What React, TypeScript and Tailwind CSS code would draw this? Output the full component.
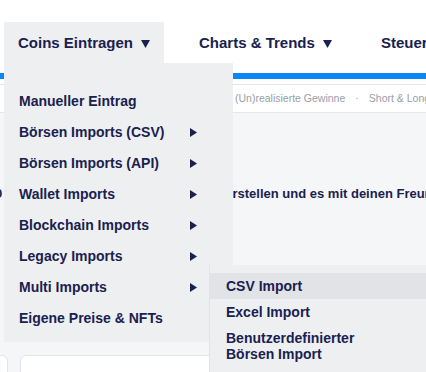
import { ReactNode } from "react"

const NAVY = "text-[#19214f]"

const menuItems: { label: string; sub?: boolean }[] = [
  { label: "Manueller Eintrag" },
  { label: "Börsen Imports (CSV)", sub: true },
  { label: "Börsen Imports (API)", sub: true },
  { label: "Wallet Imports", sub: true },
  { label: "Blockchain Imports", sub: true },
  { label: "Legacy Imports", sub: true },
  { label: "Multi Imports", sub: true },
  { label: "Eigene Preise & NFTs" },
]

const subItems = ["CSV Import", "Excel Import", "Benutzerdefinierter Börsen Import"]

const Caret = () => (
  <svg width="9" height="8" viewBox="0 0 9 8" className="ml-[8px]">
    <path d="M0 0h9L4.5 8z" fill="currentColor" />
  </svg>
)

const RightArrow = () => (
  <svg width="7" height="9" viewBox="0 0 7 9">
    <path d="M0 0l7 4.5L0 9z" fill="currentColor" />
  </svg>
)

const SubMenu = () => (
  <div className="absolute left-[206px] top-[-7px] w-[230px] bg-[#eeeff1] pt-[8px] pb-[8px] z-20 shadow-[-1px_0_0_#e2e3e7]">
    {subItems.map((s, i) => (
      <div
        key={s}
        className={`pl-[16px] py-[5px] leading-[16px] text-[14px] font-bold ${NAVY} ${i === 0 ? "bg-[#e2e3e7]" : ""}`}
      >
        <span className="block max-w-[150px]">{s}</span>
      </div>
    ))}
  </div>
)

const NavTab = ({ label, active, children }: { label: string; active?: boolean; children?: ReactNode }) => (
  <div className={`relative h-[41px] px-[14px] pt-[2px] flex items-center ${active ? "bg-[#eeeff1]" : ""}`}>
    <span className={`text-[15px] font-bold ${NAVY} flex items-center whitespace-nowrap`}>
      {label}
      <Caret />
    </span>
    {children}
  </div>
)

export default function App() {
  return (
    <div className="w-[426px] h-[372px] overflow-hidden relative bg-[#f5f6f8] font-['Liberation_Sans',Arial,sans-serif]">
      <header className="bg-white pt-[22px] pb-[10px] pl-[4px]">
        <div className="flex gap-[21px]">
          <NavTab label="Coins Eintragen" active>
            <div className="absolute left-0 top-full w-[229px] bg-[#eeeff1] pt-[23px] pb-[8px] z-10">
              {menuItems.map((m) => (
                <div key={m.label} className="relative h-[31px] pl-[15px] pr-[36px] flex items-center justify-between">
                  <span className={`text-[14px] font-bold ${NAVY} whitespace-nowrap`}>{m.label}</span>
                  {m.sub && <span className={NAVY}><RightArrow /></span>}
                  {m.label === "Multi Imports" && <SubMenu />}
                </div>
              ))}
            </div>
          </NavTab>
          <NavTab label="Charts & Trends" />
          <NavTab label="Steuerreport" />
        </div>
      </header>

      <div className="h-[6px] bg-[#0b87f5]" />
      <div className="h-[5px] bg-white" />
      <nav className="h-[29px] pt-[1px] bg-white border-y border-[#e4e6ea] flex items-center pl-[235px] gap-[10px] text-[10.5px] text-[#9a9ea8] whitespace-nowrap">
        <span>(Un)realisierte Gewinne</span>
        <span>·</span>
        <span>Short &amp; Long Term</span>
      </nav>

      <main className="pt-[73px]">
        <div className={`flex whitespace-nowrap text-[13px] font-bold ${NAVY} leading-[16px]`}>
          <span className="-ml-[5px]">0</span>
          <span className="ml-[223px]">erstellen und es mit deinen Freunden teilen</span>
        </div>
        <div className="mt-[153px] flex gap-[12px] -ml-[20px]">
          <div className="w-[28px] h-[40px] bg-white border border-[#e3e5e8] rounded-[6px]" />
          <div className="flex-1 h-[40px] bg-white border border-[#e3e5e8] rounded-[6px]" />
        </div>
      </main>
    </div>
  )
}
